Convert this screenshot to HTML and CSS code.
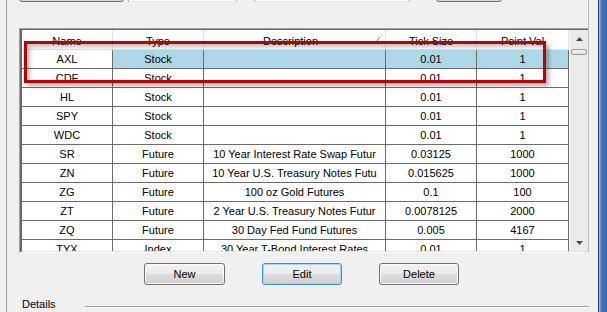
FILE: index.html
```html
<!DOCTYPE html>
<html lang="en">
<head>
  <meta charset="UTF-8">
  <title>Symbols</title>
  <link rel="stylesheet" href="styles.css">
</head>
<body>
  <div class="main">
    <div class="upper">
      <div class="strip">
        <span class="btn-stub wide"></span>
        <span class="box-stub first"></span>
        <span class="box-stub second"></span>
        <span class="btn-stub narrow"></span>
      </div>
    </div>

    <div class="grid-frame">
      <div class="grid-inner">
        <div class="grid">
          <div class="head">
            <div class="hcell">Name</div>
            <div class="hcell">Type</div>
            <div class="hcell sorted">Description
              <svg class="sort" width="4" height="5" viewBox="0 0 4 5"><path d="M0.5 4.5 L3 1" stroke="#8a8a8a" stroke-width="1" fill="none"/><rect x="3" y="0" width="1" height="1" fill="#b8b8b8"/></svg>
            </div>
            <div class="hcell">Tick Size</div>
            <div class="hcell">Point Val</div>
          </div>
          <div class="row selected"><div class="cell name">AXL</div><div class="cell">Stock</div><div class="cell"></div><div class="cell">0.01</div><div class="cell">1</div></div>
          <div class="row"><div class="cell name">CDF</div><div class="cell">Stock</div><div class="cell"></div><div class="cell">0.01</div><div class="cell">1</div></div>
          <div class="row"><div class="cell name">HL</div><div class="cell">Stock</div><div class="cell"></div><div class="cell">0.01</div><div class="cell">1</div></div>
          <div class="row"><div class="cell name">SPY</div><div class="cell">Stock</div><div class="cell"></div><div class="cell">0.01</div><div class="cell">1</div></div>
          <div class="row"><div class="cell name">WDC</div><div class="cell">Stock</div><div class="cell"></div><div class="cell">0.01</div><div class="cell">1</div></div>
          <div class="row"><div class="cell name">SR</div><div class="cell">Future</div><div class="cell">10 Year Interest Rate Swap Futur</div><div class="cell">0.03125</div><div class="cell">1000</div></div>
          <div class="row"><div class="cell name">ZN</div><div class="cell">Future</div><div class="cell">10 Year U.S. Treasury Notes Futu</div><div class="cell">0.015625</div><div class="cell">1000</div></div>
          <div class="row"><div class="cell name">ZG</div><div class="cell">Future</div><div class="cell">100 oz Gold Futures</div><div class="cell">0.1</div><div class="cell">100</div></div>
          <div class="row"><div class="cell name">ZT</div><div class="cell">Future</div><div class="cell">2 Year U.S. Treasury Notes Futur</div><div class="cell">0.0078125</div><div class="cell">2000</div></div>
          <div class="row"><div class="cell name">ZQ</div><div class="cell">Future</div><div class="cell">30 Day Fed Fund Futures</div><div class="cell">0.005</div><div class="cell">4167</div></div>
          <div class="row"><div class="cell name">TYX</div><div class="cell">Index</div><div class="cell">30 Year T-Bond Interest Rates</div><div class="cell">0.01</div><div class="cell">1</div></div>
        </div>

        <div class="vscroll">
          <div class="arrow-btn">
            <svg width="7" height="4" viewBox="0 0 7 4"><path d="M3.5 0 L7 4 L0 4 Z" fill="#4a4a4a"/></svg>
          </div>
          <div class="track"><div class="thumb"></div></div>
          <div class="arrow-btn">
            <svg width="7" height="4" viewBox="0 0 7 4"><path d="M0 0 L7 0 L3.5 4 Z" fill="#4a4a4a"/></svg>
          </div>
        </div>
      </div>
    </div>

    <div class="actions">
      <button class="win-btn new">New</button>
      <button class="win-btn focused">Edit</button>
      <button class="win-btn">Delete</button>
    </div>

    <div class="details">
      <span class="details-title">Details</span>
      <span class="details-line"></span>
    </div>
  </div>

  <div class="frame"></div>

  <!-- annotation drawn over the grid -->
  <div class="callout"></div>
</body>
</html>
```

FILE: styles.css
```css
/* ---------- Base ---------- */
*{box-sizing:border-box;margin:0;padding:0;}

body{
  width:607px;
  height:312px;
  overflow:hidden;
  display:flex;
  background:#f0f0f0;
  color:#000;
  font-family:"Liberation Sans",Arial,sans-serif;
  font-size:11px;
  position:relative;
}

.main{
  width:592px;
  margin-left:6px;
  border-left:1px solid #a0a0a0;
}

/* window border on the right */
.frame{
  width:9px;
  border-left:1px solid #23406a;
  background:linear-gradient(to right,#9db6da 0,#9db6da 1px,#4a77bb 2px,#3c68ae 100%);
}

/* ---------- Controls above (only bottoms visible) ---------- */
.upper{
  height:28px;
  width:582px;
  border-right:1px solid #bcbcbc;
}

.strip{
  height:2px;
  display:flex;
  align-items:flex-end;
  overflow:hidden;
}

.btn-stub,
.box-stub{
  flex:none;
  height:20px;
}

.btn-stub{
  border:1px solid #707070;
  border-radius:3px;
  background:#d6d6d6;
}
.btn-stub.wide{width:105px;margin-left:12px;}
.btn-stub.narrow{width:66px;margin-left:26px;}

.box-stub{
  background:#fff;
  border:1px solid #abadb3;
  border-bottom-color:#e3e9ef;
}
.box-stub.first{width:109px;margin-left:4px;}
.box-stub.second{width:156px;margin-left:17px;}

/* ---------- Grid ---------- */
.grid-frame{
  margin-left:12px;
  width:570px;
  height:225px;
  border-top:1px solid #a0a0a0;
  border-left:1px solid #a0a0a0;
  border-right:1px solid #bcbcbc;
  border-bottom:1px solid #fff;
  display:flex;
}

.grid-inner{
  flex:1;
  display:flex;
  border-top:1px solid #696969;
  border-left:2px solid #696969;
  border-bottom:1px solid #e3e3e3;
}

.grid{
  width:547px;
  overflow:hidden;
  background:#fff;
}

.head,
.row{
  display:grid;
  grid-template-columns:91px 91px 182px 91px 92px;
}

.head{height:20px;}

.hcell{
  position:relative;
  display:flex;
  align-items:center;
  justify-content:center;
  padding-top:2px;
  background:#fff;
  border-right:1px solid #e3e3e3;
  border-bottom:1px solid #e3e3e3;
  white-space:nowrap;
}
.hcell.sorted{padding-right:8px;}

.sort{
  position:absolute;
  right:5px;
  top:7px;
}

.row{height:19px;}

.cell{
  display:flex;
  align-items:center;
  justify-content:center;
  overflow:hidden;
  white-space:nowrap;
  background:#fff;
  border-right:1px solid #6d6d6d;
  border-bottom:1px solid #6d6d6d;
}

.row.selected .cell:not(.name){background:#add8e6;}

/* ---------- Scrollbar ---------- */
.vscroll{
  width:19px;
  display:flex;
  flex-direction:column;
  background:#ebebeb;
  border-left:1px solid #f7f7f7;
}

.arrow-btn{
  height:17px;
  display:flex;
  align-items:center;
  justify-content:center;
}

.track{flex:1;}

.thumb{
  height:6px;
  margin:2px 1px 0 1px;
  border:1px solid #9a9a9a;
  border-radius:2px;
  background:linear-gradient(#f6f6f6,#dedede);
}

/* ---------- Buttons ---------- */
.actions{
  display:flex;
  gap:37px;
  margin:10px 0 0 137px;
}

.win-btn{
  width:80px;
  height:22px;
  font-family:"Liberation Sans",Arial,sans-serif;
  font-size:11px;
  color:#000;
  border:1px solid #707070;
  border-radius:3px;
  background:linear-gradient(#f2f2f2 0%,#ebebeb 48%,#dddddd 52%,#cfcfcf 100%);
  box-shadow:inset 0 0 0 1px #fbfbfb;
}
.win-btn.new{width:81px;}

.win-btn.focused{
  border-color:#3c8fd3;
  box-shadow:inset 0 0 0 1px #9fd8f8;
}

/* ---------- Details group ---------- */
.details{
  display:flex;
  align-items:flex-start;
  width:567px;
  margin:11px 0 0 15px;
}

.details-title{
  line-height:13px;
  padding-top:2px;
}

.details-line{
  flex:1;
  margin:10px 0 0 29px;
  border-top:1px solid #a0a0a0;
  border-bottom:1px solid #fff;
}

/* ---------- Red annotation ---------- */
.callout{
  position:absolute;
  left:24px;
  top:41px;
  width:522px;
  height:42px;
  border:3px solid #c00000;
  box-shadow:3px 3px 4px rgba(0,0,0,.3), inset 3px 3px 4px rgba(0,0,0,.25);
  pointer-events:none;
}
```
